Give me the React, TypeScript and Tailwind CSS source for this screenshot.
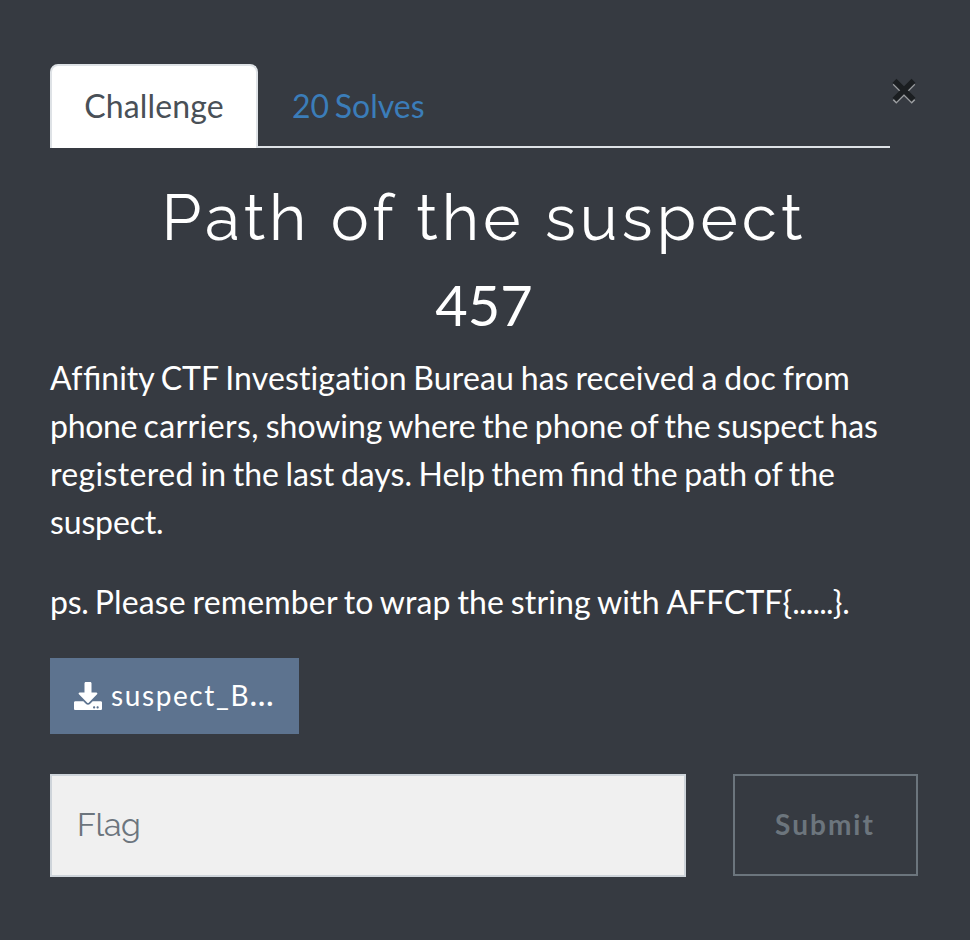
import React from "react";
import { FaDownload } from "react-icons/fa";

export default function App() {
  return (
    <main className="h-[940px] w-[970px] bg-[#363a41] px-[50px] pt-16 font-['Lato',sans-serif] text-[32px] leading-[48px] text-white">
      <header className="flex items-start">
        <nav className="flex h-[84px] w-[840px] items-start border-b-2 border-[#dee2e6]">
          <button className="h-[84px] w-[208px] rounded-t-lg border-2 border-b-0 border-[#dee2e6] bg-white pb-[2px] tracking-[0.15px] text-[#495057]">Challenge</button>
          <button className="ml-[34px] h-[84px] text-[#3b7db9] [word-spacing:-2.5px]">20 Solves</button>
        </nav>
        <button aria-label="Close" className="mt-[14px] ml-[2px]">
          <svg width="25" height="26" viewBox="0 0 25 26" fill="none">
            <path d="M2.5 5L21.5 24M21.5 5L2.5 24" stroke="#9b9da0" strokeWidth="5" />
            <path d="M2.5 2.8L21.5 21.8M21.5 2.8L2.5 21.8" stroke="#1b1e21" strokeWidth="5.5" />
          </svg>
        </button>
      </header>
      <h2 className="mt-[31px] -ml-[2px] text-center font-['Raleway','Lato',sans-serif] text-[64px] leading-[77px] tracking-[4px]">Path of the suspect</h2>
      <h3 className="mt-[15px] -ml-[2px] text-center text-[56px] leading-[67px]">457</h3>
      <p className="mt-4 whitespace-nowrap [word-spacing:-1.6px]">
        <span className="tracking-[0.4px]">Af</span>finity <span className="tracking-[0.1px]">CTF </span><span className="tracking-[0.13px]">Investigation Bureau has received a doc from</span><br />
        <span className="tracking-[-0.3px]">phone </span><span className="tracking-[0.4px]">carriers, </span><span className="tracking-[-0.06px]">showing where the phone of the suspect has</span><br />
        <span className="tracking-[0.35px]">registered </span>in the last days. Help them find the path of the<br />
        <span className="tracking-[-0.15px]">suspect.</span>
      </p>
      <p className="mt-8 whitespace-nowrap [word-spacing:-1.6px]">
        <span className="tracking-[-0.3px]">ps. </span><span className="tracking-[0.15px]">Please remember to wrap the string with </span>AFFCTF{"{"}<span className="tracking-[-0.8px]">......</span>{"}"}.
      </p>
      <button className="mt-8 flex h-[76px] w-[249px] items-center bg-[#5d738f] pl-6 text-[28px] tracking-[2px]">
        <FaDownload className="mr-[9px] size-7" /><span className="-mt-[3px] tracking-[1.6px]">suspect_B<b>...</b></span>
      </button>
      <form className="mt-10 flex">
        <input placeholder="Flag" className="h-[103px] w-[636px] border-2 border-[#ced4da] bg-[#f0f0f0] px-[25px] pb-[3px] font-['Raleway','Lato',sans-serif] tracking-[-0.3px] placeholder:text-[#6c757d]" />
        <button className="ml-[47px] h-[102px] w-[185px] border-2 border-[#6c757d] pr-[1px] pl-0 pb-[2px] text-[28px] font-bold tracking-[2px] text-[#6c757d]">Submit</button>
      </form>
    </main>
  );
}
